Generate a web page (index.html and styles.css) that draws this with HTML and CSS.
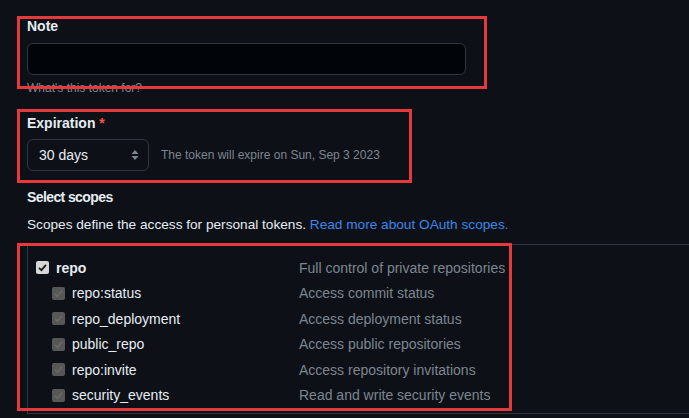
FILE: index.html
```html
<!DOCTYPE html>
<html lang="en">
<head>
<meta charset="utf-8">
<title>New personal access token</title>
<link rel="stylesheet" href="styles.css">
</head>
<body>
<main class="page">
  <section class="field field-note">
    <label class="label">Note</label>
    <div class="text-input"></div>
    <p class="hint hint-note">What's this token for?</p>
  </section>

  <section class="field field-exp">
    <label class="label">Expiration <span class="req">*</span></label>
    <div class="exp-row">
      <div class="select">
        <span>30 days</span>
        <svg class="arrows" width="8" height="12" viewBox="0 0 8 12"><path d="M4 1 L7.5 5 H0.5 Z M4 11 L7.5 7 H0.5 Z" fill="#7d8590"/></svg>
      </div>
      <span class="hint">The token will expire on Sun, Sep 3 2023</span>
    </div>
  </section>

  <section class="scopes-head">
    <h3 class="label label-scopes">Select scopes</h3>
    <p class="desc">Scopes define the access for personal tokens. <a href="#" class="link">Read more about OAuth scopes.</a></p>
  </section>

  <section class="scope-table">
    <div class="scope-row">
      <div class="scope-name parent"><span class="cb cb-on"><svg width="13" height="13" viewBox="0 0 13 13"><path d="M3 6.8 L5.4 9.2 L10 3.8" fill="none" stroke="#1c1c1c" stroke-width="1.8"/></svg></span><b>repo</b></div>
      <div class="scope-desc">Full control of private repositories</div>
    </div>
    <div class="scope-row">
      <div class="scope-name child"><span class="cb cb-dis"><svg width="13" height="13" viewBox="0 0 13 13"><path d="M3 6.8 L5.4 9.2 L10 3.8" fill="none" stroke="#6a6a6a" stroke-width="1.6"/></svg></span>repo:status</div>
      <div class="scope-desc">Access commit status</div>
    </div>
    <div class="scope-row">
      <div class="scope-name child"><span class="cb cb-dis"><svg width="13" height="13" viewBox="0 0 13 13"><path d="M3 6.8 L5.4 9.2 L10 3.8" fill="none" stroke="#6a6a6a" stroke-width="1.6"/></svg></span>repo_deployment</div>
      <div class="scope-desc">Access deployment status</div>
    </div>
    <div class="scope-row">
      <div class="scope-name child"><span class="cb cb-dis"><svg width="13" height="13" viewBox="0 0 13 13"><path d="M3 6.8 L5.4 9.2 L10 3.8" fill="none" stroke="#6a6a6a" stroke-width="1.6"/></svg></span>public_repo</div>
      <div class="scope-desc">Access public repositories</div>
    </div>
    <div class="scope-row">
      <div class="scope-name child"><span class="cb cb-dis"><svg width="13" height="13" viewBox="0 0 13 13"><path d="M3 6.8 L5.4 9.2 L10 3.8" fill="none" stroke="#6a6a6a" stroke-width="1.6"/></svg></span>repo:invite</div>
      <div class="scope-desc">Access repository invitations</div>
    </div>
    <div class="scope-row">
      <div class="scope-name child"><span class="cb cb-dis"><svg width="13" height="13" viewBox="0 0 13 13"><path d="M3 6.8 L5.4 9.2 L10 3.8" fill="none" stroke="#6a6a6a" stroke-width="1.6"/></svg></span>security_events</div>
      <div class="scope-desc">Read and write security events</div>
    </div>
  </section>
</main>
</body>
</html>
```

FILE: styles.css
```css
html, body {
  margin: 0;
  padding: 0;
  background: #0d1117;
  height: 100%;
  overflow: hidden;
}
body {
  font-family: "Liberation Sans", Arial, sans-serif;
  font-size: 14px;
  color: #e6edf3;
}
.page {
  padding: 16px 0 0 27px;
}
.field, .scopes-head, .scope-table {
  position: relative;
}
.label {
  display: block;
  font-size: 14px;
  font-weight: bold;
  line-height: 21px;
  margin: 0;
  color: #e6edf3;
}
.label-scopes { letter-spacing: -0.6px; }
.req { color: #f85149; }
.text-input {
  margin-top: 6px;
  width: 437px;
  height: 30px;
  border: 1px solid #30363d;
  border-radius: 6px;
  background: #010409;
}
.hint {
  font-size: 12px;
  line-height: 18px;
  color: #7d8590;
  margin: 0;
}
.hint-note { margin-top: 4px; }
.field-exp { margin-top: 16px; }
.exp-row {
  margin-top: 5px;
  display: flex;
  align-items: center;
  gap: 12px;
}
.select {
  box-sizing: border-box;
  width: 122px;
  height: 32px;
  border: 1px solid #30363d;
  border-radius: 6px;
  background: #0d1117;
  display: flex;
  align-items: center;
  justify-content: space-between;
  padding: 0 9px 0 11px;
  font-size: 14px;
  color: #e6edf3;
}
.scopes-head { margin-top: 16px; }
.desc {
  margin: 7px 0 0;
  font-size: 13.65px;
  line-height: 20px;
  color: #e6edf3;
}
.link { color: #3f86ea; text-decoration: none; }
.scope-table {
  margin-top: 9px;
  border-top: 1px solid #30363d;
  border-left: 1px solid #30363d;
  border-bottom: 1px solid #30363d;
  padding: 10px 0 5px 8px;
}
.scope-row {
  display: grid;
  grid-template-columns: 263px 1fr;
  height: 25.5px;
  align-items: center;
}
.scope-name {
  display: flex;
  align-items: center;
  gap: 7px;
  color: #e6edf3;
}
.scope-name.child { padding-left: 16px; }
.scope-desc { color: #7d8590; }
.cb {
  width: 13px;
  height: 13px;
  border-radius: 2px;
  display: flex;
}
.cb-on { background: #d6d6d6; }
.cb-dis { background: #575757; }

/* red annotation frames drawn over the sections */
.field-note::after,
.field-exp::after,
.scope-table::after {
  content: "";
  position: absolute;
  border: 3px solid #e5393b;
  pointer-events: none;
}
.field-note::after { left: -10px; top: 0; width: 464px; height: 67px; }
.field-exp::after { left: -10px; top: -4px; width: 389px; height: 68px; }
.scope-table::after { left: -11px; top: -2px; width: 489px; height: 162px; }
```
